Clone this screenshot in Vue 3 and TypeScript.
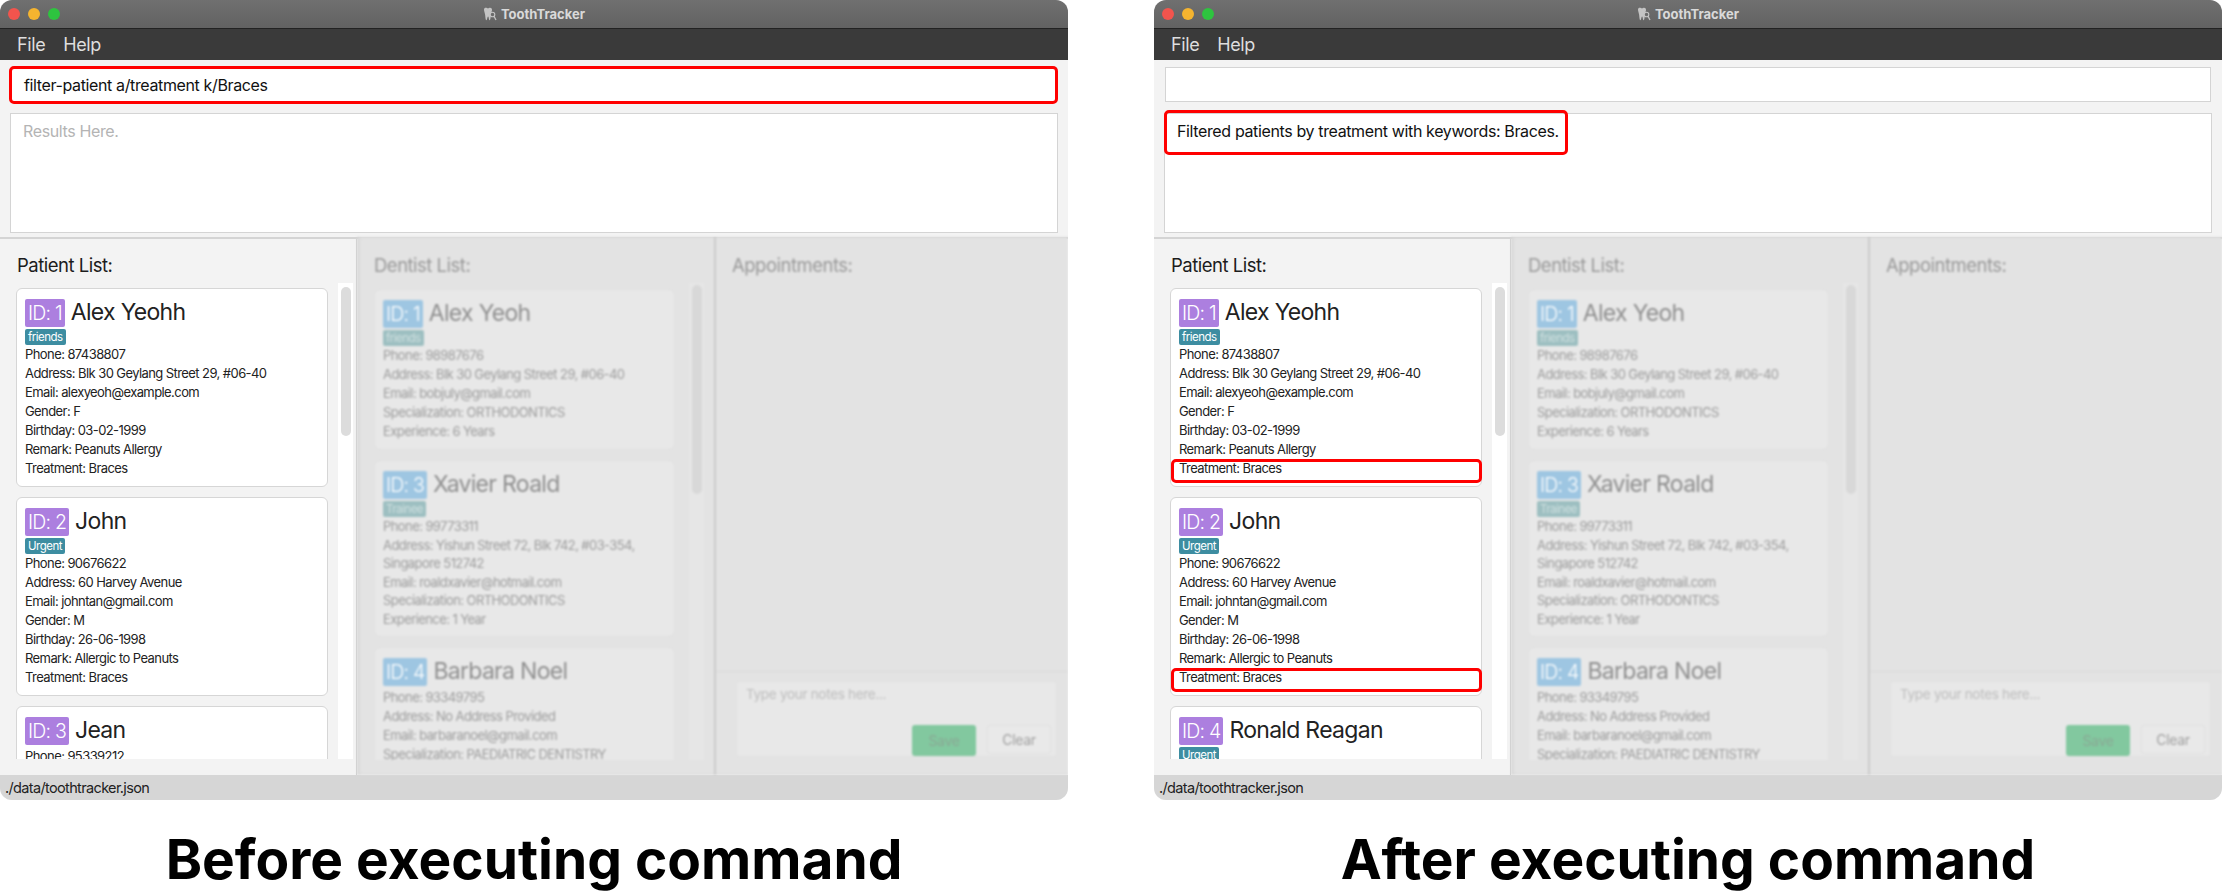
<template>
  <div class="page">
    <div class="windows">
      <div class="window" v-for="win in windows" :key="win.caption">
        <div class="titlebar">
          <div class="lights">
            <span class="light red"></span>
            <span class="light yellow"></span>
            <span class="light green"></span>
          </div>
          <div class="title">
            <svg class="tooth" width="14" height="15" viewBox="0 0 14 15">
              <path d="M1 2.6C1 1.200 2.100.6 3.200.8c.7.1 1.100.6 1.800.6s1.100-.5 1.800-.6C8 .6 9 1.300 9 2.800c0 1.600-.9 2.800-1.100 4.400-.2 1.900-.3 6-1.300 6-.9 0-.7-3.700-1.500-3.700S4.300 13.200 3.400 13.200C2.400 13.200 2.400 8.800 2 7.200 1.700 5.600 1 4.200 1 2.600z" fill="#c4c4c4" />
              <circle cx="9.500" cy="7.500" r="2.300" fill="#6a6a6a" stroke="#c4c4c4" stroke-width="1.100" />
              <path d="M11 9.300 13 13" stroke="#c4c4c4" stroke-width="1.300" />
            </svg>
            <span>ToothTracker</span>
          </div>
        </div>
        <div class="menubar">
          <span>File</span>
          <span>Help</span>
        </div>
        <div class="top">
          <div class="command" :class="{ marked: win.command }">{{ win.command }}</div>
          <div class="results">
            <span v-if="win.result" class="result marked">{{ win.result }}</span>
            <span v-else class="placeholder">Results Here.</span>
          </div>
        </div>
        <div class="panels">
          <section class="panel patients">
            <h2>Patient List:</h2>
            <div class="list-wrap">
              <div class="list">
                <article class="card" v-for="p in win.patients" :key="p.id">
                  <div class="head">
                    <span class="badge purple">ID: {{ p.id }}</span>
                    <span class="name">{{ p.name }}</span>
                  </div>
                  <span v-if="p.tag" class="tag">{{ p.tag }}</span>
                  <div
                    v-for="row in p.rows"
                    :key="row"
                    class="row"
                    :class="{ hit: win.highlight && row.startsWith('Treatment') }"
                  >{{ row }}</div>
                </article>
              </div>
              <div class="track"><div class="thumb"></div></div>
            </div>
          </section>
          <div class="dimmed">
            <section class="panel dentists">
              <h2>Dentist List:</h2>
              <div class="list-wrap">
                <div class="list">
                  <article class="card" v-for="d in dentists" :key="d.id">
                    <div class="head">
                      <span class="badge blue">ID: {{ d.id }}</span>
                      <span class="name">{{ d.name }}</span>
                    </div>
                    <span v-if="d.tag" class="tag">{{ d.tag }}</span>
                    <div v-for="row in d.rows" :key="row" class="row">{{ row }}</div>
                  </article>
                </div>
                <div class="track"><div class="thumb short"></div></div>
              </div>
            </section>
            <section class="panel appointments">
              <h2>Appointments:</h2>
              <div class="spacer"></div>
              <div class="notes">
                <div class="note-box">
                  <span class="note-hint">Type your notes here...</span>
                  <div class="actions">
                    <span class="btn save">Save</span>
                    <span class="btn clear">Clear</span>
                  </div>
                </div>
              </div>
            </section>
          </div>
        </div>
        <div class="status">./data/toothtracker.json</div>
      </div>
    </div>
    <div class="captions">
      <div class="caption" v-for="win in windows" :key="win.caption">{{ win.caption }}</div>
    </div>
  </div>
</template>

<script setup lang="ts">
interface IPerson {
  id: number;
  name: string;
  tag?: string;
  rows: string[];
}

interface IWindow {
  caption: string;
  command: string;
  result: string;
  highlight: boolean;
  patients: IPerson[];
}

const alex: IPerson = {
  id: 1,
  name: "Alex Yeohh",
  tag: "friends",
  rows: [
    "Phone: 87438807",
    "Address: Blk 30 Geylang Street 29, #06-40",
    "Email: alexyeoh@example.com",
    "Gender: F",
    "Birthday: 03-02-1999",
    "Remark: Peanuts Allergy",
    "Treatment: Braces",
  ],
};

const john: IPerson = {
  id: 2,
  name: "John",
  tag: "Urgent",
  rows: [
    "Phone: 90676622",
    "Address: 60 Harvey Avenue",
    "Email: johntan@gmail.com",
    "Gender: M",
    "Birthday: 26-06-1998",
    "Remark: Allergic to Peanuts",
    "Treatment: Braces",
  ],
};

const windows: IWindow[] = [
  {
    caption: "Before executing command",
    command: "filter-patient a/treatment k/Braces",
    result: "",
    highlight: false,
    patients: [alex, john, { id: 3, name: "Jean", rows: ["Phone: 95339212"] }],
  },
  {
    caption: "After executing command",
    command: "",
    result: "Filtered patients by treatment with keywords: Braces.",
    highlight: true,
    patients: [alex, john, { id: 4, name: "Ronald Reagan", tag: "Urgent", rows: [] }],
  },
];

const dentists: IPerson[] = [
  {
    id: 1,
    name: "Alex Yeoh",
    tag: "friends",
    rows: [
      "Phone: 98987676",
      "Address: Blk 30 Geylang Street 29, #06-40",
      "Email: bobjuly@gmail.com",
      "Specialization: ORTHODONTICS",
      "Experience: 6 Years",
    ],
  },
  {
    id: 3,
    name: "Xavier Roald",
    tag: "Trainee",
    rows: [
      "Phone: 99773311",
      "Address: Yishun Street 72, Blk 742, #03-354, Singapore 512742",
      "Email: roaldxavier@hotmail.com",
      "Specialization: ORTHODONTICS",
      "Experience: 1 Year",
    ],
  },
  {
    id: 4,
    name: "Barbara Noel",
    rows: [
      "Phone: 93349795",
      "Address: No Address Provided",
      "Email: barbaranoel@gmail.com",
      "Specialization: PAEDIATRIC DENTISTRY",
    ],
  },
];
</script>

<style>
html,
body {
  background: #fff;
}
</style>

<style scoped>
.page {
  width: 2223px;
  height: 891px;
  overflow: hidden;
  font-family: Inter, "Liberation Sans", sans-serif;
  color: #1c1c1c;
}
.windows {
  display: flex;
  gap: 86px;
}
.window {
  width: 1068px;
  height: 800px;
  display: flex;
  flex-direction: column;
  background: #f3f3f3;
  border-radius: 12px;
  overflow: hidden;
}
.titlebar {
  height: 28px;
  flex: none;
  position: relative;
  display: flex;
  align-items: center;
  justify-content: center;
  background: linear-gradient(#707070, #626262);
  border-bottom: 1px solid #222;
}
.lights {
  position: absolute;
  left: 8px;
  top: 8px;
  display: flex;
  gap: 8px;
}
.light {
  width: 12px;
  height: 12px;
  border-radius: 50%;
}
.red { background: #f2544d; }
.yellow { background: #f5b42f; }
.green { background: #2ec43f; }
.title {
  display: flex;
  align-items: center;
  gap: 4px;
  font-size: 13px;
  font-weight: 700;
  color: #d9d9d9;
}
.menubar {
  height: 31px;
  flex: none;
  display: flex;
  align-items: center;
  gap: 18px;
  padding-left: 17px;
  background: #3a3a3a;
  color: #dedede;
  font-size: 18px;
  letter-spacing: -0.4px;
}
.top {
  height: 179px;
  box-sizing: border-box;
  flex: none;
  padding: 7px 10px 0;
  display: flex;
  flex-direction: column;
  gap: 11px;
  border-bottom: 2px solid #d4d4d4;
  font-size: 16px;
  letter-spacing: -0.37px;
}
.command {
  position: relative;
  height: 35px;
  width: 1046px;
  margin-left: 1px;
  box-sizing: border-box;
  flex: none;
  display: flex;
  align-items: center;
  padding-left: 12px;
  background: #fff;
  border: 1px solid #d4d4d4;
  color: #111;
}
.results {
  height: 120px;
  box-sizing: border-box;
  background: #fff;
  border: 1px solid #d4d4d4;
  padding: 7px 12px;
  position: relative;
}
.placeholder {
  color: #b4b4b4;
}
.result {
  color: #111;
}
.marked::after {
  content: "";
  position: absolute;
  border: 3px solid #f00;
  border-radius: 5px;
}
.command.marked::after {
  inset: -2px -2px -3px -3px;
}
.result.marked::after {
  left: -1px;
  top: -4px;
  width: 398px;
  height: 39px;
}
.panels {
  flex: 1;
  display: flex;
  min-height: 0;
}
.panel {
  box-sizing: border-box;
  display: flex;
  flex-direction: column;
  min-height: 0;
}
.panel h2 {
  margin: 0;
  padding: 14px 0 0 17px;
  height: 44px;
  box-sizing: border-box;
  font-size: 18.500px;
  letter-spacing: -0.5px;
  line-height: 24px;
  font-weight: 400;
  flex: none;
}
.patients {
  width: 357px;
  flex: none;
  border-right: 1px solid #cfcfcf;
  padding-bottom: 16px;
}
.list-wrap {
  flex: 1;
  display: flex;
  min-height: 0;
  padding-left: 16px;
}
.list {
  width: 312px;
  flex: none;
  padding-top: 5px;
  overflow: hidden;
}
.card {
  box-sizing: border-box;
  background: #fff;
  border: 1px solid #d6d6d6;
  border-radius: 6px;
  padding: 10px 8px 8px;
  margin-bottom: 10px;
}
.head {
  display: flex;
  align-items: center;
  gap: 6px;
  height: 28px;
}
.head + .row {
  margin-top: 2px;
}
.badge {
  height: 28px;
  padding: 0 3px;
  display: flex;
  align-items: center;
  font-size: 19.500px;
  font-weight: 300;
  letter-spacing: -0.8px;
  color: #fff;
  border-radius: 2px;
}
.purple { background: #ac7fdf; }
.blue { background: #9ec6e2; }
.name {
  font-size: 23px;
  letter-spacing: -0.7px;
  line-height: 28px;
  color: #222;
  margin-top: -3px;
}
.tag {
  display: block;
  width: fit-content;
  min-width: 32px;
  height: 16px;
  line-height: 16px;
  margin: 2px 0 0;
  padding: 0 3px;
  font-size: 11.500px;
  letter-spacing: -0.5px;
  background: #3d8da1;
  color: #fff;
  border-radius: 2px;
}
.row {
  position: relative;
  font-size: 13px;
  letter-spacing: -0.58px;
  line-height: 19px;
  color: #222;
}
.hit::after {
  content: "";
  position: absolute;
  left: -8px;
  right: -9px;
  top: 0;
  height: 18px;
  border: 3px solid #f00;
  border-radius: 5px;
}
.track {
  width: 15px;
  flex: none;
  margin-left: 10px;
  padding: 4px 2px 0 3px;
  box-sizing: border-box;
  background: #fff;
}
.thumb {
  height: 149px;
  background: #dcdcdc;
  border-radius: 5px;
}
.dimmed {
  flex: 1;
  display: flex;
  background: #e3e3e3;
  margin-top: -2px;
  filter: blur(1.300px);
  box-shadow: inset 2px 0 3px #d5d5d5;
}
.dimmed .row {
  color: #9c9c9c;
}
.dimmed .name {
  color: #8f8f8f;
}
.dimmed .panel h2 {
  color: #999;
  height: 46px;
  padding-top: 16px;
}
.dentists {
  width: 359px;
  flex: none;
  border-right: 2px solid #cbcbcb;
  padding-bottom: 15px;
}
.dentists .list-wrap {
  padding-left: 17px;
}
.dentists .list {
  width: 301px;
  padding-top: 6px;
}
.dentists .card {
  background: #e8e8e8;
  border-color: #e0e0e0;
}
.dentists .card:nth-child(2) .row {
  line-height: 18.500px;
}
.dentists .tag {
  background: #9dbfc1;
  color: #cfe0e0;
}
.dentists .track {
  background: #e6e6e6;
  margin-left: 14px;
  padding-top: 2px;
}
.dentists .thumb {
  background: #d8d8d8;
}
.thumb.short {
  height: 209px;
}
.appointments {
  flex: 1;
}
.appointments.panel h2 {
  padding-left: 16px;
}
.spacer {
  flex: 1;
  border-bottom: 1px solid #d9d9d9;
}
.notes {
  height: 103px;
  box-sizing: border-box;
  flex: none;
  padding: 9px 11px 0 20px;
}
.note-box {
  height: 76px;
  position: relative;
  box-sizing: border-box;
  background: #e8e8e8;
  border: 1px solid #e0e0e0;
  padding: 4px 9px;
  font-size: 13.500px;
  letter-spacing: -0.3px;
  color: #bdbdbd;
}
.actions {
  position: absolute;
  right: 5px;
  bottom: 0;
  display: flex;
  gap: 11px;
  align-items: flex-start;
}
.btn {
  width: 64px;
  height: 31px;
  display: flex;
  align-items: center;
  justify-content: center;
  border-radius: 3px;
  font-size: 14px;
  letter-spacing: -0.3px;
}
.save {
  background: #82c89f;
  color: #8aa894;
}
.clear {
  background: #e9e9e9;
  border: 1px solid #e0e0e0;
  color: #a0a0a0;
  box-sizing: border-box;
  height: 29px;
}
.status {
  height: 25px;
  flex: none;
  display: flex;
  align-items: center;
  padding-left: 5px;
  background: #d6d6d6;
  font-size: 14.500px;
  letter-spacing: -0.65px;
  color: #222;
}
.captions {
  display: flex;
  gap: 86px;
  margin-top: 31px;
}
.caption {
  width: 1068px;
  text-align: center;
  font-size: 55px;
  line-height: 56px;
  font-weight: 700;
  color: #000;
}
</style>
